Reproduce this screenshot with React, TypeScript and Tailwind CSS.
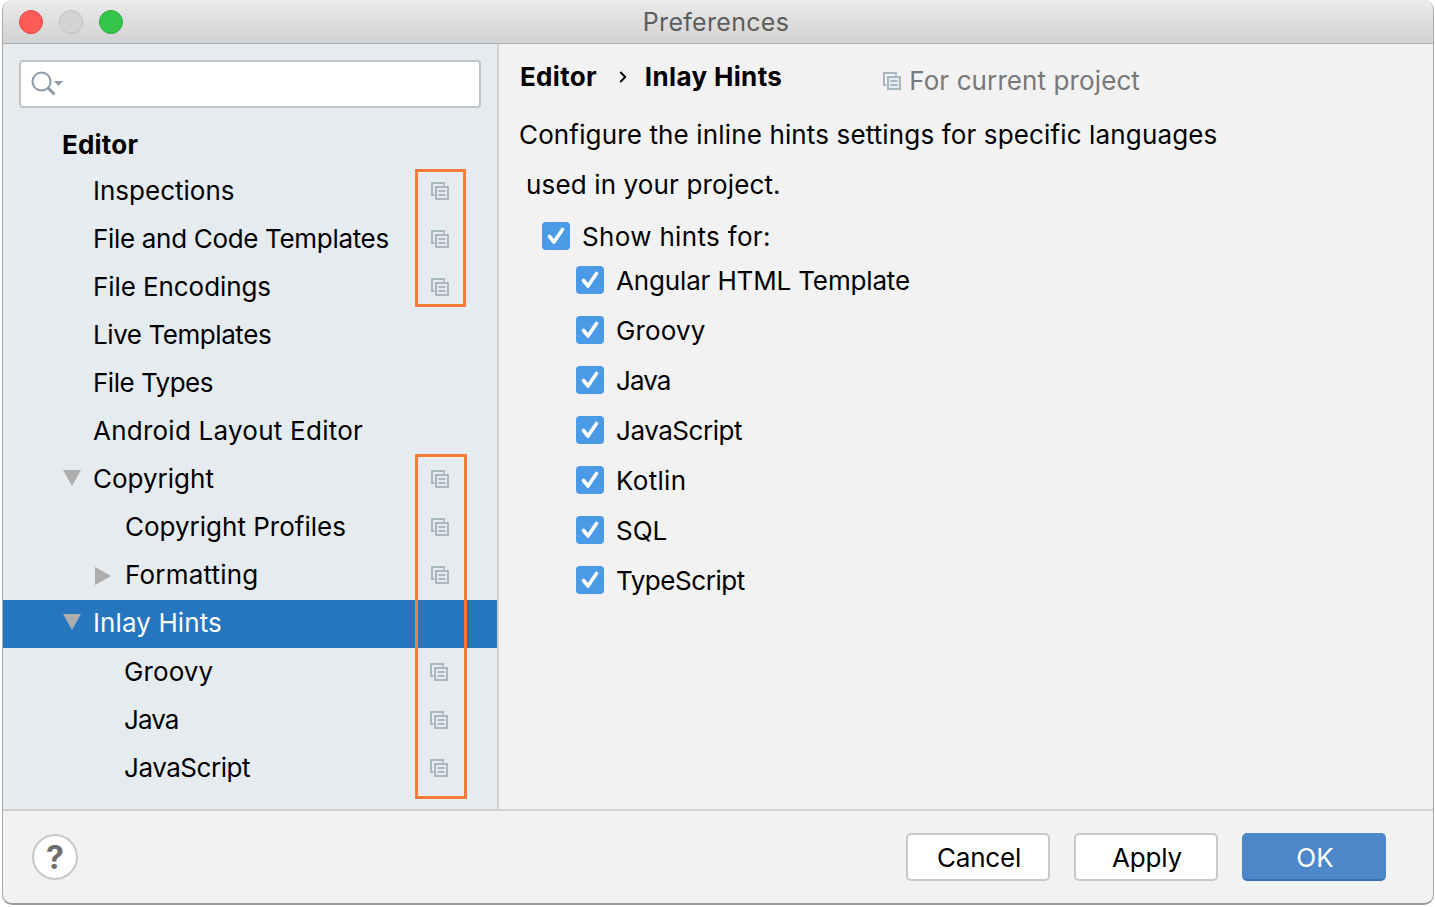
import { ChevronRight } from "lucide-react";

const rows = [
  { label: "Inspections", left: "ml-[90px]", icon: true },
  { label: "File and Code Templates", left: "ml-[90px]", icon: true, track: "tracking-[-0.32px]" },
  { label: "File Encodings", left: "ml-[90px]", icon: true, track: "tracking-[-0.08px]" },
  { label: "Live Templates", left: "ml-[90px]", track: "tracking-[-0.43px]" },
  { label: "File Types", left: "ml-[90px]", track: "tracking-[-0.5px]" },
  { label: "Android Layout Editor", left: "ml-[90px]", track: "tracking-[0.24px]" },
  { label: "Copyright", left: "ml-[12px]", icon: true, arrow: "down" },
  { label: "Copyright Profiles", left: "ml-[122px]", icon: true },
  { label: "Formatting", left: "ml-[13px]", icon: true, arrow: "right", track: "tracking-[0.2px]" },
  { label: "Inlay Hints", left: "ml-[12px]", arrow: "down", selected: true, track: "tracking-[0.1px]" },
  { label: "Groovy", left: "ml-[121px]", icon: true, shift: true, track: "tracking-[0.1px]" },
  { label: "Java", left: "ml-[121px]", icon: true, shift: true, track: "tracking-[-0.9px]" },
  { label: "JavaScript", left: "ml-[121px]", icon: true, shift: true, track: "tracking-[-0.45px]" },
];

const languages = [
  { label: "Angular HTML Template", track: "tracking-[-0.15px]" },
  { label: "Groovy", track: "tracking-[0.15px]" },
  { label: "Java", track: "tracking-[-0.9px]" },
  { label: "JavaScript", track: "tracking-[-0.45px]" },
  { label: "Kotlin", track: "tracking-[0.3px]" },
  { label: "SQL", track: "" },
  { label: "TypeScript", track: "tracking-[-0.45px]" },
];

function CopyIcon({ className }: { className?: string }) {
  return (
    <svg viewBox="0 0 18 18" className={className} fill="none" stroke="#a9b7bf" strokeWidth="2">
      <path d="M3.5 13H1V1h12v2.5" />
      <rect x="5" y="5" width="12" height="12" fill="#e6ebf0" />
      <path d="M7.5 9h7M7.5 13h7" />
    </svg>
  );
}

function Arrow({ dir }: { dir: string }) {
  return (
    <svg viewBox="0 0 18 18" className="w-[18px] h-[18px]" fill="#adadad">
      {dir === "down" ? <path d="M0 1h18L9 17z" /> : <path d="M1 0l16 9-16 9z" />}
    </svg>
  );
}

function Checkbox() {
  return (
    <span className="flex w-7 h-7 rounded-[4px] bg-[#4a9ae6]">
      <svg viewBox="0 0 28 28" className="w-7 h-7" fill="none" stroke="#fff" strokeWidth="3.6" strokeLinecap="round" strokeLinejoin="round">
        <path d="M7.500 14.500l4.500 5.500 8.500-12.500" />
      </svg>
    </span>
  );
}

function DialogButton({ label, primary }: { label: string; primary?: boolean }) {
  return (
    <button
      className={
        primary
          ? "w-36 h-12 pt-[2px] pl-[2px] rounded-[5px] bg-[#4c88c9] border border-[#4c88c9] border-b-2 border-b-[#3b72b0] text-white text-[26px]"
          : "w-36 h-12 pl-[2px] rounded-[5px] bg-white border-2 border-[#c8c8c8] text-black text-[26px] tracking-[-0.2px]"
      }
    >
      {label}
    </button>
  );
}

export default function App() {
  return (
    <div className="w-[1435px] h-[907px] bg-white pl-[2px] font-['Inter',sans-serif] text-black overflow-hidden">
      <div className="relative w-[1432px] h-[905px] flex flex-col rounded-[10px] border border-[#a9a9a9] border-t-0 border-b-2 border-b-[#9a9a9a] bg-[#f2f2f2] overflow-hidden">
        <div className="relative h-11 shrink-0 flex items-center gap-4 pl-[16px] border-b border-[#aeaeae] bg-gradient-to-b from-[#ebebeb] to-[#d2d2d2]">
          <span className="w-6 h-6 rounded-full bg-[#fc5b57] border border-[#e5483f]" />
          <span className="w-6 h-6 rounded-full bg-[#d4d4d4] border border-[#bdbdbd]" />
          <span className="w-6 h-6 rounded-full bg-[#35c649] border border-[#2cab3b]" />
          <span className="absolute inset-0 flex items-center justify-center pr-[4px] pt-[2px] text-[25px] tracking-[0.3px] text-[#5d5d5d]">
            Preferences
          </span>
        </div>

        <div className="flex flex-1 min-h-0">
          <div className="w-[496px] shrink-0 bg-[#e6ebf0] border-r-2 border-[#d0d0d0] pt-4">
            <div className="ml-4 mr-4 h-12 flex items-center pl-[10px] bg-white rounded-[4px] border-2 border-[#c4c4c4]">
              <svg viewBox="0 0 32 28" className="w-8 h-7 mt-[2px]" fill="none" stroke="#8d9aa5">
                <circle cx="10.500" cy="10.500" r="9" strokeWidth="2" />
                <path d="M17 17l6.500 6.500" strokeWidth="3" />
                <path d="M23 10h9l-4.500 5z" fill="#8d9aa5" stroke="none" />
              </svg>
            </div>
            <div className="h-12 flex items-center pl-[59px] mt-[12px] text-[26px] font-bold tracking-[0.2px]">Editor</div>
            {rows.map((row) => (
              <div
                key={row.label}
                className={`h-12 flex items-center text-[26px] ${row.selected ? "bg-[#2675bf] text-white" : ""}`}
              >
                {row.arrow && (
                  <span className={`flex ${row.arrow === "down" ? "ml-[60px] -mt-[4px]" : "ml-[91px]"}`}>
                    <Arrow dir={row.arrow} />
                  </span>
                )}
                <span className={`${row.left} ${row.track ?? ""} ${row.shift ? "mb-[2px]" : "mb-[3px]"}`}>{row.label}</span>
                {row.icon && (
                  <CopyIcon className={`w-[18px] h-[18px] ml-auto ${row.shift ? "mr-[49px]" : "mr-[48px] mb-[2px]"}`} />
                )}
              </div>
            ))}
          </div>

          <div className="flex-1 pl-[20px]">
            <div className="flex items-start h-[67px] pt-[13px] pl-[1px] text-[26px] font-bold">
              <span className="tracking-[0.3px]">Editor</span>
              <ChevronRight size={18} strokeWidth={2.5} className="ml-[17px] mt-[11px]" />
              <span className="ml-[13px] tracking-[0.35px]">Inlay Hints</span>
              <span className="flex items-center ml-[101px] mt-[4px] font-normal text-[#787878] tracking-[0.1px]">
                <CopyIcon className="w-[18px] h-[18px] mr-[8px]" />
                For current project
              </span>
            </div>
            <p className="h-[50px] flex items-center text-[26px] tracking-[0.14px] -mt-[2px]">
              Configure the inline hints settings for specific languages
            </p>
            <p className="h-[50px] flex items-center pl-[7px] text-[26px] tracking-[0.14px]">used in your project.</p>
            <div className="flex items-center gap-3 h-[50px] pl-[23px] text-[26px] tracking-[0.33px] mt-[2px]">
              <Checkbox />
              Show hints for:
            </div>
            <ul className="-mt-[6px]">
              {languages.map((lang) => (
                <li key={lang.label} className={`flex items-center gap-3 h-[50px] pl-[57px] text-[26px] ${lang.track}`}>
                  <Checkbox />
                  {lang.label}
                </li>
              ))}
            </ul>
          </div>
        </div>

        <div className="h-[94px] shrink-0 flex items-center border-t-2 border-[#d0d0d0] pl-[29px] pr-[47px]">
          <span className="flex items-center justify-center w-[46px] h-[46px] pt-[2px] rounded-full bg-white border-2 border-[#c8c8c8] text-[32px] font-bold text-[#6e6e6e]">
            ?
          </span>
          <div className="ml-auto flex gap-6">
            <DialogButton label="Cancel" />
            <DialogButton label="Apply" />
            <DialogButton label="OK" primary />
          </div>
        </div>

        <div className="absolute left-[412px] top-[169px] w-[51px] h-[138px] border-[3px] border-[#fb7b3c]" />
        <div className="absolute left-[412px] top-[454px] w-[52px] h-[345px] border-[3px] border-[#fb7b3c]" />
      </div>
    </div>
  );
}
